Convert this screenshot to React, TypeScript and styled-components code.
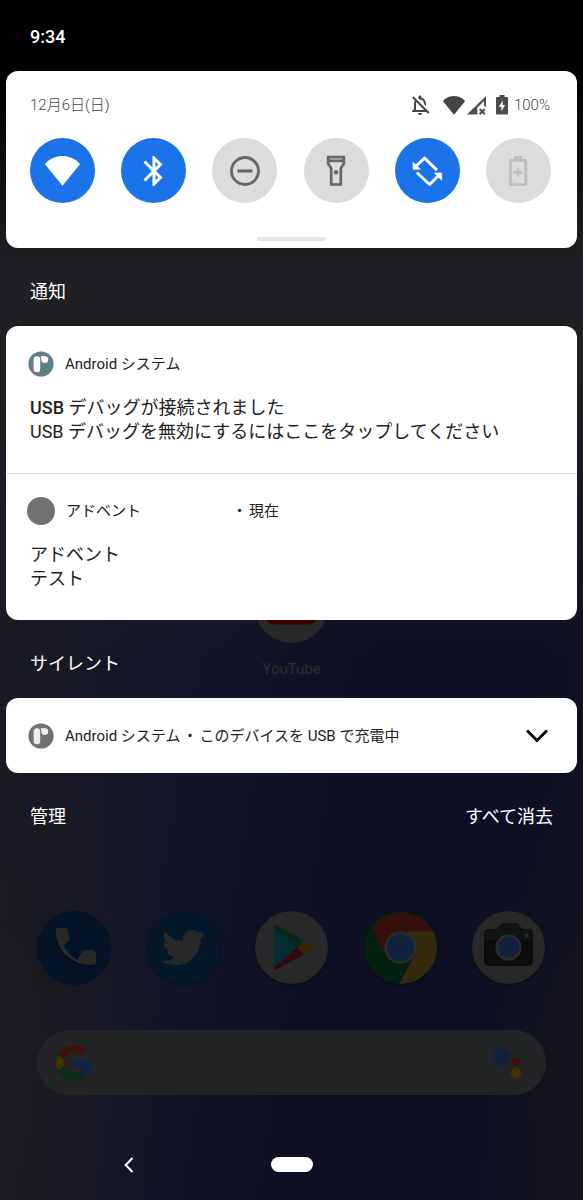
import React from "react";
import styled, { createGlobalStyle } from "styled-components";
import { MdOutlineNotificationsOff } from "react-icons/md";
import { FaTwitter } from "react-icons/fa";

const GlobalStyle = createGlobalStyle`
  *, *::before, *::after { box-sizing: border-box; }
  body {
    margin: 0;
    background: #000;
    font-family: Roboto, "Noto Sans CJK JP", sans-serif;
    -webkit-font-smoothing: antialiased;
  }
  button, input { font: inherit; color: inherit; }
  button { padding: 0; border: 0; background: none; cursor: pointer; }
  h2, h3, p { margin: 0; font-weight: 400; }
  svg { display: block; flex: none; }
`;

const Screen = styled.div`
  display: grid;
  grid-template-columns: minmax(0, 1fr);
  min-height: 100vh;
  background:
    linear-gradient(180deg, #000 0, #000 80px, rgba(0, 0, 0, 0) 270px),
    radial-gradient(ellipse 30% 50% at 0% 90%, #1c1b1f 0%, rgba(28, 27, 31, 0) 100%),
    radial-gradient(ellipse 16% 24% at 100% 92%, #16151e 0%, rgba(22, 21, 30, 0) 100%),
    linear-gradient(180deg, #201f24 0%, #201f24 28%, rgba(32, 31, 36, 0) 55%),
    linear-gradient(100deg, #1b1b23 0%, #131628 38%, #0d1022 62%, #0d1022 82%, #11131f 100%);
`;

const Home = styled.main`
  grid-area: 1 / 1;
  display: flex;
  flex-direction: column;
  justify-content: flex-end;
`;

const Shade = styled.section`
  grid-area: 1 / 1;
  align-self: start;
  z-index: 1;
  padding: 0 6px;
`;

const StatusBar = styled.header`
  height: 71px;
  padding: 3px 24px 0;
  display: flex;
  align-items: center;
  color: #fff;
  font: 500 18px/24px Roboto, sans-serif;
`;

const Card = styled.section`
  background: #fff;
  color: #212121;
  border-radius: 12px;
`;

const QuickSettings = styled(Card)`
  height: 177px;
  padding: 22px 24px 7px 24px;
  display: flex;
  flex-direction: column;
`;

const InfoRow = styled.div`
  display: flex;
  align-items: center;
  justify-content: space-between;
  height: 24px;
  padding-right: 2px;
  color: #444;
  font-size: 15px;
  font-weight: 300;
  line-height: 24px;
`;

const StatusIcons = styled.div`
  display: flex;
  align-items: center;
  padding-right: 1px;
`;

const Network = styled.span`
  display: flex;
  gap: 2px;
  margin: 0 10px 0 11px;
`;

const Battery = styled.span`
  display: flex;
  align-items: center;
  gap: 6px;
`;

const Tiles = styled.div`
  display: flex;
  justify-content: space-between;
  margin-top: 21px;
  padding-right: 2px;
`;

const Tile = styled.button<{ $on?: boolean; $off?: boolean }>`
  width: 65px;
  height: 65px;
  border-radius: 50%;
  display: grid;
  place-items: center;
  background: ${(p) => (p.$on ? "#1a73e8" : "#dcdcdc")};
  color: ${(p) => (p.$on ? "#fff" : p.$off ? "#bebebe" : "#666")};
`;

const Handle = styled.div`
  width: 69px;
  height: 4px;
  margin: auto auto 0;
  border-radius: 2px;
  background: #e4e4e4;
`;

const SectionTitle = styled.h2`
  padding: 30px 24px 20px;
  color: #fff;
  font-size: 18px;
  line-height: 28px;
`;

const Notice = styled.article`
  height: 147px;
  padding: 24px 24px 0 22px;
  & + & { border-top: 1px solid #dcdcdc; padding-top: 23px; }
`;

const NoticeHead = styled.header`
  display: flex;
  align-items: center;
  height: 28px;
  gap: 11px;
  font-size: 15px;
  line-height: 20px;
`;

const HeadText = styled.p`
  display: flex;
  flex: 1;
`;

const AppName = styled.span<{ $wide?: boolean }>`
  min-width: ${(p) => (p.$wide ? "164px" : "0")};
`;

const Separator = styled.span`
  padding: 0 2px;
`;

const Dot = styled.span`
  width: 28px;
  height: 28px;
  margin-left: -1px;
  border-radius: 50%;
  background: #707173;
`;

const NoticeBody = styled.div`
  padding: 18px 0 0 2px;
  font-size: 18px;
  line-height: 24px;
`;

const NoticeTitle = styled.h3`
  font-size: 18px;
  font-weight: 400;
`;

const Strong = styled.span`
  font-weight: 500;
`;

const SilentCard = styled(Card)`
  display: flex;
  align-items: center;
  gap: 11px;
  height: 75px;
  padding: 0 28px 0 22px;
  font-size: 15px;
  line-height: 20px;
`;

const Actions = styled.footer`
  display: flex;
  justify-content: space-between;
  padding: 30px 24px 0 24px;
  color: #fff;
  font-size: 18px;
  line-height: 28px;
`;

const AppShortcut = styled.button`
  align-self: center;
  margin-bottom: 232px;
  color: #2e2e2e;
  font-size: 15px;
  line-height: 20px;
`;

const ShortcutIcon = styled.span`
  display: flex;
  justify-content: center;
  margin-bottom: 16px;
`;

const Dock = styled.nav`
  display: flex;
  justify-content: space-between;
  padding: 0 38px;
  margin-bottom: 46px;
`;

const DockIcon = styled.button<{ $bg: string }>`
  width: 73px;
  height: 73px;
  border-radius: 50%;
  display: grid;
  place-items: center;
  overflow: hidden;
  background: ${(p) => p.$bg};
  color: #282828;
  box-shadow: 0 1px 2px rgba(0, 0, 0, 0.4);
`;

const SearchBar = styled.form`
  display: flex;
  align-items: center;
  height: 65px;
  margin: 0 37px 34px;
  padding: 0 20px 0 19px;
  border-radius: 33px;
  background: #222426;
`;

const SearchInput = styled.input`
  flex: 1;
  min-width: 0;
  border: 0;
  outline: 0;
  background: transparent;
  color: #555;
`;

const NavBar = styled.nav`
  display: grid;
  grid-template-columns: repeat(3, 1fr);
  height: 71px;
  padding: 0 47px;
`;

const NavButton = styled.button`
  display: grid;
  place-items: center;
`;

const HomePill = styled.span`
  width: 42px;
  height: 15px;
  border-radius: 8px;
  background: #fff;
`;

const WifiGlyph = ({ width, height }: { width: number; height: number }) => (
  <svg width={width} height={height} viewBox="0 0 35 30" fill="currentColor">
    <path d="M17.500 29.700 35 8.200C33.500 5.800 27.200 0 17.500 0S1.500 5.800 0 8.200Z" />
  </svg>
);

const SignalGlyph = () => (
  <svg width="19" height="19" viewBox="0 0 19 19">
    <path d="M0 18.500 19 0V10.500H17V5L10.300 11.700V18.500Z" fill="#4d4d4d" />
    <path d="M12.600 13 17.800 18.200M17.800 13 12.600 18.200" stroke="#4d4d4d" strokeWidth="2" />
  </svg>
);

const ChargeGlyph = () => (
  <svg width="12" height="20" viewBox="0 0 12 20">
    <path d="M3.500 0h5v2H11q1 0 1 1V18.500q0 1-1 1H1q-1 0-1-1V3q0-1 1-1H3.500Z" fill="#4d4d4d" />
    <path d="M6.700 5.500 2.900 11.700H5.400V16.200L9.100 10H6.700Z" fill="#fff" />
  </svg>
);

const BluetoothGlyph = () => (
  <svg width="36" height="36" viewBox="0 0 24 24" fill="currentColor">
    <path d="M17.710 7.710 12 2h-1v7.590L6.410 5 5 6.410 10.590 12 5 17.590 6.410 19 11 14.410V22h1l5.710-5.710-4.300-4.290 4.300-4.290zM13 5.830l1.880 1.880L13 9.590V5.830zm1.880 10.460L13 18.170v-3.760l1.880 1.880z" />
  </svg>
);

const DisturbGlyph = () => (
  <svg width="36" height="36" viewBox="0 0 36 36" fill="none" stroke="currentColor">
    <circle cx="18" cy="18" r="13.500" strokeWidth="2.800" />
    <path d="M10.500 18h15" strokeWidth="3" />
  </svg>
);

const TorchGlyph = () => (
  <svg width="36" height="36" viewBox="0 0 24 24" fill="none" stroke="currentColor">
    <path d="M6.800 2.800H17.200V7L15.200 10.200V21H8.800V10.200L6.800 7Z" strokeWidth="1.800" />
    <path d="M6.500 5.200h11" strokeWidth="1.800" />
    <circle cx="12" cy="12.800" r="1.500" fill="currentColor" stroke="none" />
  </svg>
);

const RotateGlyph = () => (
  <svg width="36" height="36" viewBox="0 0 24 24" fill="none" stroke="currentColor" strokeWidth="1.900">
    <path d="M4.500 8.900 10.400 3.400 18.700 11.400M5.200 13 13.700 21 19.600 15.200" strokeLinejoin="round" />
    <path d="M2.700 6V10.900H7.600ZM16.900 13.300H21.800V18.200Z" fill="currentColor" strokeWidth=".4" />
  </svg>
);

const SaverGlyph = () => (
  <svg width="36" height="36" viewBox="0 0 24 24" fill="none" stroke="currentColor">
    <rect x="6.900" y="4.900" width="10.300" height="16.200" rx=".5" strokeWidth="1.800" />
    <path d="M9.300 3h5.400" strokeWidth="2" />
    <path d="M12 10.100v5.800M9.100 13h5.800" strokeWidth="1.600" />
  </svg>
);

const SystemIcon = ({ color, light }: { color: string; light: string }) => (
  <svg width="26" height="26" viewBox="0 0 26 26">
    <circle cx="13" cy="13" r="12.600" fill={color} />
    <rect x="5.600" y="5.200" width="6.600" height="16" rx="3.300" fill={light} />
    <path d="M12.600 5.200H17V9L13.600 8.500Z" fill={light} />
    <circle cx="16.800" cy="8.600" r="3.400" fill={light} />
  </svg>
);

const ChevronGlyph = () => (
  <svg width="24" height="24" viewBox="0 0 24 24" fill="none" stroke="#000" strokeWidth="2.700">
    <path d="M2 6.500 12 16.500 22 6.500" />
  </svg>
);

const YouTubeGlyph = () => (
  <svg width="73" height="73" viewBox="0 0 73 73">
    <circle cx="36.500" cy="36.500" r="36.500" fill="#282828" />
    <rect x="10" y="18" width="53" height="36.500" rx="9" fill="#3a0000" />
    <path d="M31 28.500 46 36.500 31 44.500Z" fill="#282828" />
  </svg>
);

const PhoneGlyph = () => (
  <svg width="73" height="73" viewBox="0 0 73 73">
    <path d="M17.500 19.500q0-2.500 3-2.500h8q2 0 2.200 2l1.300 8.500q.2 1.500-1 2.500l-5.500 4.500Q30 43 40 48.500l4-7.500q1-2 3-2h7.500q2.500 0 3 2.200l1.200 7.300q.3 5.500-5.700 5.500C33 54.500 17.500 38 17.500 19.500Z" fill="#010a18" transform="translate(-1 2)" opacity=".6" />
    <path d="M17.500 19.500q0-2.500 3-2.500h7q2 0 2.300 2l1.700 8.500q.2 1.500-1 2.500l-4.500 5Q30.500 44 39.500 49l4-7.500q1-2.300 3.500-2.300h7.500q2.500 0 3 2.200l1.200 7.100q.3 5.500-5.700 5.500C33 54 17.500 38 17.500 19.500Z" fill="#282828" />
  </svg>
);

const PlayGlyph = () => (
  <svg width="73" height="73" viewBox="0 0 73 73">
    <path d="M19 15.500V57.500L42 36.500Z" fill="#032c33" />
    <path d="M19 16q0-2 3-1.500L49 29.500 42 36.500 19 16Z" fill="#02291a" />
    <path d="M19 57q0 2 3 1L49 43.500 42 36.500Z" fill="#310813" />
    <path d="M49 29.500 58 34.500q3 2 0 4L49 43.500 42 36.500Z" fill="#332600" />
  </svg>
);

const ChromeGlyph = () => (
  <svg width="73" height="73" viewBox="0 0 73 73">
    <path d="M7 18.300A36.500 36.500 0 0 1 69.500 20.300H36.500A16.200 16.200 0 0 0 22.500 44.600Z" fill="#340f0c" />
    <path d="M69.500 20.300A36.500 36.500 0 0 1 35 73L50.500 44.600A16.200 16.200 0 0 0 36.500 20.300Z" fill="#35290c" />
    <circle cx="36.500" cy="36.500" r="16.200" fill="#2b2b2f" />
    <circle cx="36.500" cy="36.500" r="13.300" fill="#10223e" />
  </svg>
);

const CameraGlyph = () => (
  <svg width="73" height="73" viewBox="0 0 73 73">
    <path d="M17 18H24.500L29 13.500q1-1.500 3-1.500h11q2 0 3 1.500L50.500 18H56q5 0 5 5V50q0 5-5 5H17q-5 0-5-5V23q0-5 5-5Z" fill="#0a0c0d" />
    <path d="M17 18H24.500L29 13.500q1-1.500 3-1.500h11q2 0 3 1.500L50.500 18H56q5 0 5 5v6H12V23q0-5 5-5Z" fill="#101314" />
    <circle cx="36.500" cy="36.500" r="13.200" fill="#2a2a2b" />
    <circle cx="36.500" cy="36.500" r="10.400" fill="#10223e" />
    <circle cx="54.700" cy="24.500" r="2.200" fill="#2a2a2b" />
  </svg>
);

const GoogleGlyph = () => (
  <svg width="36" height="36" viewBox="0 0 48 48">
    <path fill="#3f110e" d="M24 9.500c3.540 0 6.710 1.220 9.210 3.600l6.850-6.850C35.900 2.380 30.470 0 24 0 14.620 0 6.510 5.380 2.560 13.220l7.980 6.190C12.430 13.720 17.740 9.500 24 9.500z" />
    <path fill="#10224a" d="M46.980 24.550c0-1.570-.15-3.090-.38-4.550H24v9.020h12.940c-.58 2.960-2.260 5.480-4.780 7.180l7.730 6c4.510-4.180 7.090-10.360 7.090-17.650z" />
    <path fill="#423000" d="M10.530 28.590c-.48-1.450-.76-2.990-.76-4.590s.27-3.140.76-4.590l-7.980-6.190C.92 16.460 0 20.120 0 24c0 3.880.92 7.540 2.560 10.780l7.970-6.190z" />
    <path fill="#0b2d16" d="M24 48c6.480 0 11.930-2.130 15.890-5.810l-7.730-6c-2.150 1.450-4.920 2.300-8.160 2.300-6.260 0-11.570-4.220-13.470-9.910l-7.980 6.190C6.510 42.620 14.620 48 24 48z" />
  </svg>
);

const AssistantGlyph = () => (
  <svg width="34" height="34" viewBox="0 0 34 34">
    <circle cx="9" cy="11" r="9" fill="#10223e" />
    <circle cx="24" cy="15.500" r="4.400" fill="#3f110e" />
    <circle cx="31" cy="10.500" r="2.300" fill="#0b2d16" />
    <circle cx="24" cy="27" r="5.200" fill="#423000" />
  </svg>
);

const BackGlyph = () => (
  <svg width="10" height="16" viewBox="0 0 10 16" fill="none" stroke="#fff" strokeWidth="2">
    <path d="M8.500 1 1.700 8 8.500 15" />
  </svg>
);

const dock = [
  { name: "電話", bg: "#041326", icon: <PhoneGlyph /> },
  { name: "Twitter", bg: "#04182a", icon: <FaTwitter size={43} /> },
  { name: "Play ストア", bg: "#282828", icon: <PlayGlyph /> },
  { name: "Chrome", bg: "#04200f", icon: <ChromeGlyph /> },
  { name: "カメラ", bg: "#282828", icon: <CameraGlyph /> },
];

const tiles = [
  { name: "Wi-Fi", on: true, icon: <WifiGlyph width={35} height={30} /> },
  { name: "Bluetooth", on: true, icon: <BluetoothGlyph /> },
  { name: "サイレント モード", icon: <DisturbGlyph /> },
  { name: "ライト", icon: <TorchGlyph /> },
  { name: "自動回転", on: true, icon: <RotateGlyph /> },
  { name: "バッテリー セーバー", off: true, icon: <SaverGlyph /> },
];

export default function App() {
  return (
    <>
      <GlobalStyle />
      <Screen>
        <Home>
          <AppShortcut>
            <ShortcutIcon><YouTubeGlyph /></ShortcutIcon>
            YouTube
          </AppShortcut>
          <Dock>
            {dock.map((app) => (
              <DockIcon key={app.name} $bg={app.bg} aria-label={app.name}>{app.icon}</DockIcon>
            ))}
          </Dock>
          <SearchBar>
            <GoogleGlyph />
            <SearchInput aria-label="検索" />
            <AssistantGlyph />
          </SearchBar>
          <NavBar>
            <NavButton aria-label="戻る"><BackGlyph /></NavButton>
            <NavButton aria-label="ホーム"><HomePill /></NavButton>
          </NavBar>
        </Home>

        <Shade>
          <StatusBar>9:34</StatusBar>
          <QuickSettings>
            <InfoRow>
              <span>12月6日(日)</span>
              <StatusIcons>
                <MdOutlineNotificationsOff size={24} />
                <Network>
                  <WifiGlyph width={22} height={19} />
                  <SignalGlyph />
                </Network>
                <Battery><ChargeGlyph />100%</Battery>
              </StatusIcons>
            </InfoRow>
            <Tiles>
              {tiles.map((t) => (
                <Tile key={t.name} $on={t.on} $off={t.off} aria-label={t.name} aria-pressed={!!t.on}>
                  {t.icon}
                </Tile>
              ))}
            </Tiles>
            <Handle />
          </QuickSettings>

          <SectionTitle>通知</SectionTitle>
          <Card>
            <Notice>
              <NoticeHead>
                <SystemIcon color="#607d8b" light="#fff" />
                <HeadText>
                  <AppName>Android システム</AppName>
                </HeadText>
              </NoticeHead>
              <NoticeBody>
                <NoticeTitle><Strong>USB</Strong> デバッグが接続されました</NoticeTitle>
                <p>USB デバッグを無効にするにはここをタップしてください</p>
              </NoticeBody>
            </Notice>
            <Notice>
              <NoticeHead>
                <Dot />
                <HeadText>
                  <AppName $wide>アドベント</AppName>
                  <Separator>・</Separator>
                  <span>現在</span>
                </HeadText>
              </NoticeHead>
              <NoticeBody>
                <NoticeTitle>アドベント</NoticeTitle>
                <p>テスト</p>
              </NoticeBody>
            </Notice>
          </Card>

          <SectionTitle>サイレント</SectionTitle>
          <SilentCard>
            <SystemIcon color="#707173" light="#eee" />
            <HeadText>
              <AppName>Android システム</AppName>
              <Separator>・</Separator>
              <span>このデバイスを USB で充電中</span>
            </HeadText>
            <button aria-label="展開"><ChevronGlyph /></button>
          </SilentCard>

          <Actions>
            <button>管理</button>
            <button>すべて消去</button>
          </Actions>
        </Shade>
      </Screen>
    </>
  );
}
